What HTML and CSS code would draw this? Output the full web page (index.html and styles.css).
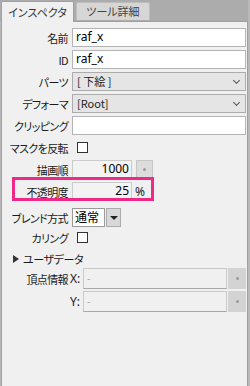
FILE: index.html
```html
<!DOCTYPE html>
<html lang="ja">
<head>
    <meta charset="UTF-8">
    <title>インスペクタ</title>
    <link rel="stylesheet" href="styles.css">
</head>
<body>
    <div class="wrap">
        <div class="tabs">
            <div class="tab active">インスペクタ</div>
            <div class="tab">ツール詳細</div>
        </div>

        <div class="panel">
            <div class="row">
                <span class="label">名前</span>
                <div class="field text">raf_x</div>
            </div>
            <div class="row">
                <span class="label">ID</span>
                <div class="field text">raf_x</div>
            </div>
            <div class="row">
                <span class="label">パーツ</span>
                <div class="field select">[ 下絵 ]<span class="chev"></span></div>
            </div>
            <div class="row">
                <span class="label">デフォーマ</span>
                <div class="field select">[Root]<span class="chev"></span></div>
            </div>
            <div class="row">
                <span class="label">クリッピング</span>
                <div class="field text"></div>
            </div>
            <div class="row">
                <span class="label">マスクを反転</span>
                <span class="check"></span>
            </div>
            <div class="row">
                <span class="label">描画順</span>
                <div class="num">1000</div>
                <div class="dot-btn small"></div>
            </div>
            <div class="row">
                <span class="label">不透明度</span>
                <div class="num">25</div>
                <span class="unit">%</span>
            </div>
            <div class="row blend">
                <span class="label">ブレンド方式</span>
                <div class="combo">通常</div>
                <div class="drop"></div>
            </div>
            <div class="row">
                <span class="label">カリング</span>
                <span class="check"></span>
            </div>
            <div class="group">
                <span class="arrow"></span>ユーザデータ
            </div>
            <div class="row vert">
                <span class="label">頂点情報</span>
                <span class="axis">X:</span>
                <div class="field off">-</div>
                <div class="dot-btn"></div>
            </div>
            <div class="row vert">
                <span class="label"></span>
                <span class="axis">Y:</span>
                <div class="field off">-</div>
                <div class="dot-btn"></div>
            </div>
        </div>

        <!-- 注目枠 -->
        <div class="highlight"></div>
    </div>
</body>
</html>
```

FILE: styles.css
```css
* {
    box-sizing: border-box;
}

html, body {
    margin: 0;
    height: 100%;
    background-color: #b9b9b9;
}

body {
    font-family: "Noto Sans CJK JP", "Noto Sans", sans-serif;
    font-size: 11px;
    color: #1a1a1a;
    font-feature-settings: "palt";
}

.wrap {
    position: relative;
    height: 100%;
    width: 248px;
    display: flex;
    flex-direction: column;
}

.tabs {
    display: flex;
    align-items: flex-end;
    height: 21px;
    background-color: #acacac;
    padding-left: 1px;
}

.tab {
    height: 18px;
    width: 74px;
    margin-left: 2px;
    background-color: #d6d6d6;
    border: 1px solid #bdbdbd;
    border-bottom: none;
    border-radius: 2px 2px 0 0;
    color: #444;
    font-size: 11px;
    line-height: 17px;
    text-align: center;
    margin-bottom: 1px;
}

.tab.active {
    height: 21px;
    width: 73px;
    margin-left: 0;
    margin-bottom: -1px;
    background-color: #f0f0f0;
    border-color: #a0a0a0;
    color: #333;
    line-height: 20px;
    position: relative;
    z-index: 1;
}

.panel {
    flex: 1;
    margin-left: 1px;
    background-color: #f0f0f0;
    border: 1px solid #a0a0a0;
    border-bottom: none;
    padding: 6px 1px 0 0;
}

.row {
    display: flex;
    align-items: center;
    height: 19px;
    margin-bottom: 3px;
}

.label {
    width: 66px;
    flex: none;
    text-align: right;
    margin-right: 4px;
    white-space: nowrap;
    letter-spacing: -0.6px;
}

.field {
    flex: 1;
    height: 19px;
    border: 1px solid #b4b4b4;
    padding: 0 3px;
    font-family: "Noto Sans", sans-serif;
    font-size: 12px;
    line-height: 16px;
}

.text {
    background-color: #fff;
    color: #000;
}

.select {
    position: relative;
    background-color: #e5e5e5;
    border-color: #acacac;
    padding-left: 4px;
    font-family: "Noto Sans CJK JP", sans-serif;
    font-size: 11px;
    color: #222;
}

.chev {
    position: absolute;
    right: 6px;
    top: 5px;
    width: 5px;
    height: 5px;
    border-right: 1px solid #555;
    border-bottom: 1px solid #555;
    transform: rotate(45deg);
}

.check {
    width: 11px;
    height: 11px;
    margin-left: 5px;
    border: 1px solid #333;
    background-color: #fff;
}

.num {
    width: 60px;
    height: 19px;
    background-color: #f3f3f3;
    border: 1px solid #cbcbcb;
    text-align: right;
    padding-right: 2px;
    font-family: "Noto Sans", sans-serif;
    font-size: 12px;
    line-height: 16px;
    color: #000;
}

.unit {
    margin-left: 3px;
    font-family: "Noto Sans", sans-serif;
    font-size: 12px;
}

.dot-btn {
    position: relative;
    width: 18px;
    height: 21px;
    background-color: #d3d3d3;
    margin-left: 1px;
}

.dot-btn::after {
    content: "";
    position: absolute;
    left: 8px;
    top: 9px;
    width: 3px;
    height: 3px;
    border-radius: 50%;
    background-color: #9a9a9a;
}

.dot-btn.small {
    width: 17px;
    height: 19px;
    margin-left: 4px;
    background-color: #dcdcdc;
    border: 1px solid #c6c6c6;
}

.dot-btn.small::after {
    left: 6px;
    top: 7px;
}

.blend {
    margin-top: 7px;
    margin-bottom: 1px;
}

.combo {
    width: 33px;
    height: 19px;
    background-color: #fff;
    border: 1px solid #9a9a9a;
    padding-left: 2px;
    font-size: 12px;
    line-height: 16px;
    color: #000;
}

.drop {
    position: relative;
    width: 15px;
    height: 19px;
    margin-left: 1px;
    background-color: #d8d8d8;
    border: 1px solid #acacac;
}

.drop::after {
    content: "";
    position: absolute;
    left: 3px;
    top: 7px;
    border-left: 4px solid transparent;
    border-right: 4px solid transparent;
    border-top: 4px solid #222;
}

.group {
    display: flex;
    align-items: center;
    height: 18px;
    padding-left: 11px;
    margin-top: 1px;
    font-size: 11px;
    letter-spacing: -0.4px;
}

.arrow {
    width: 0;
    height: 0;
    margin-right: 4px;
    border-top: 4px solid transparent;
    border-bottom: 4px solid transparent;
    border-left: 6px solid #333;
}

.vert {
    height: 21px;
    margin-bottom: 2px;
}

.vert .label {
    margin-right: 2px;
}

.axis {
    width: 13px;
    font-family: "Noto Sans", sans-serif;
    font-size: 12px;
}

.off {
    height: 21px;
    background-color: #f0f0f0;
    border-color: #c9c9c9 #c9c9c9 #a8a8a8 #c9c9c9;
    color: #b0b0b0;
    line-height: 18px;
    font-size: 11px;
}

.highlight {
    position: absolute;
    left: 12px;
    top: 177px;
    width: 142px;
    height: 24px;
    border: 3px solid #ee2a86;
}
```
